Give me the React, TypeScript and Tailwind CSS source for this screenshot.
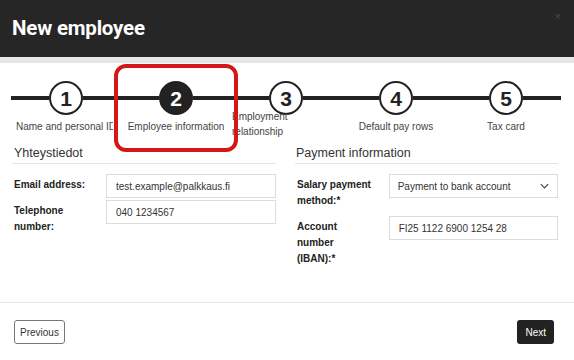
import React from "react";

const steps = [
  { n: "1", label: "Name and personal ID" },
  { n: "2", label: "Employee information", active: true },
  { n: "3", label: "Employment relationship" },
  { n: "4", label: "Default pay rows" },
  { n: "5", label: "Tax card" },
];

function Step({ n, label, active, idx }: { n: string; label: string; active?: boolean; idx: number }) {
  return (
    <div className="w-[110px] flex flex-col">
      <div className="flex items-center h-[34px]">
        <div className="flex-1 h-[4px] bg-[#222]" />
        <div
          className={
            active
              ? "w-[34px] h-[34px] rounded-full bg-[#222] border-2 border-[#222] flex items-center justify-center text-white text-[21px] font-bold leading-none"
              : "w-[34px] h-[34px] rounded-full bg-white border-2 border-[#222] flex items-center justify-center text-[#222] text-[21px] font-bold leading-none"
          }
        >
          {n}
        </div>
        <div className="flex-1 h-[4px] bg-[#222]" />
      </div>
      {idx === 0 ? (
        <div className="mt-[5px] h-[14px] overflow-hidden w-[102px]">
          <div className="w-[110px] text-center whitespace-nowrap text-[10px] leading-[14px] text-[#444]">{label}</div>
        </div>
      ) : idx === 2 ? (
        <div className="-mt-[6px] w-[66px] text-[10px] leading-[15px] text-[#444] pl-[1px]">{label}</div>
      ) : (
        <div className="mt-[5px] text-center whitespace-nowrap text-[10px] leading-[14px] text-[#444]">{label}</div>
      )}
    </div>
  );
}

function Row({ label, children }: { label: React.ReactNode; children: React.ReactNode }) {
  return (
    <div className="flex mb-[2px]">
      <div className="w-[94px] pl-[2px] pr-[14px] pt-[3px] pb-[5px] text-[10px] leading-[16px] font-bold text-[#222]">
        {label}
      </div>
      {children}
    </div>
  );
}

function Input({ value }: { value: string }) {
  return (
    <div className="w-[170px] h-[24px] border border-[#dcdcdc] flex items-center pl-[9px] text-[10px] text-[#333]">
      {value}
    </div>
  );
}

export default function App() {
  return (
    <div className="relative w-[574px] h-[360px] bg-white flex flex-col font-['Liberation_Sans',Arial,sans-serif] overflow-hidden">
      <div className="h-[57px] bg-[#262626] flex items-center justify-between pl-[12px] pr-[13px] shrink-0">
        <div className="text-white text-[20.5px] font-bold font-['Roboto',sans-serif] tracking-[-0.2px] pb-[1px]">New employee</div>
        <div className="self-start mt-[8px] text-[#4a4a4a] text-[11px]">×</div>
      </div>
      <div className="h-[6px] bg-[#e6e6e6] shrink-0" />

      <div className="h-[81px] pl-[11px] pt-[18px] flex shrink-0">
        {steps.map((s, i) => (
          <Step key={s.n} n={s.n} label={s.label} active={s.active} idx={i} />
        ))}
      </div>

      <div className="flex-1 grid grid-cols-[264px_263px] gap-x-[19px] pl-[12px]">
        <div>
          <div className="h-[20px] border-b border-[#e5e5e5] pl-[2px] pt-[1px] text-[12.5px] leading-[16px] text-[#333]">Yhteystiedot</div>
          <div className="mt-[10px]">
            <Row label="Email address:">
              <Input value="test.example@palkkaus.fi" />
            </Row>
            <Row label="Telephone number:">
              <Input value="040 1234567" />
            </Row>
          </div>
        </div>
        <div>
          <div className="h-[20px] border-b border-[#e5e5e5] pl-[1px] pt-[1px] text-[12.5px] leading-[16px] text-[#333]">Payment information</div>
          <div className="mt-[10px]">
            <Row label="Salary payment method:*">
              <div className="w-[170px] h-[24px] border border-[#dcdcdc] flex items-center justify-between pl-[8px] pr-[8px] text-[10px] text-[#333]">
                <span>Payment to bank account</span>
                <svg width="9" height="6" viewBox="0 0 10 6" fill="none">
                  <path d="M1 1l4 4 4-4" stroke="#444" strokeWidth="1.3" />
                </svg>
              </div>
            </Row>
            <Row label="Account number (IBAN):*">
              <Input value="FI25 1122 6900 1254 28" />
            </Row>
          </div>
        </div>
      </div>

      <div className="h-[58px] border-t border-[#e5e5e5] shrink-0 flex justify-between items-start pt-[17px] pl-[14px] pr-[20px]">
        <button className="h-[24px] px-[5px] border border-[#777] rounded-[3px] text-[10px] text-[#333] bg-white">Previous</button>
        <button className="h-[24px] px-[8px] rounded-[3px] text-[10px] text-white bg-[#222]">Next</button>
      </div>

      <div className="absolute left-[114px] top-[64px] w-[124px] h-[88px] border-[4px] border-[#d41717] rounded-[12px] pointer-events-none" />
    </div>
  );
}
